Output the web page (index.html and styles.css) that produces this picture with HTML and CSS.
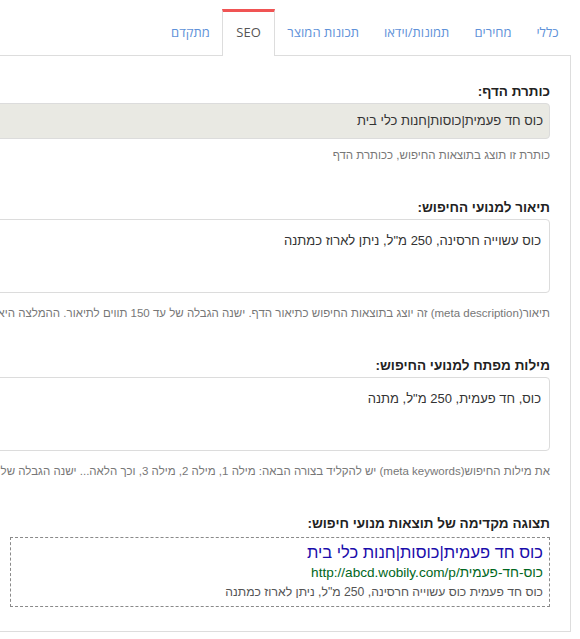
FILE: index.html
```html
<!DOCTYPE html>
<html dir="rtl" lang="he">
<head>
<meta charset="utf-8">
<title>SEO</title>
<link rel="stylesheet" href="styles.css">
</head>
<body>
<div class="page">
  <ul class="tabs">
    <li class="tab">כללי</li>
    <li class="tab">מחירים</li>
    <li class="tab">תמונות/וידאו</li>
    <li class="tab">תכונות המוצר</li>
    <li class="tab tab-active">SEO</li>
    <li class="tab">מתקדם</li>
  </ul>
  <div class="panel">
    <div class="field">
      <label class="label">כותרת הדף:</label>
      <div class="control control-readonly">כוס חד פעמית|כוסות|חנות כלי בית</div>
      <p class="help">כותרת זו תוצג בתוצאות החיפוש, ככותרת הדף</p>
    </div>
    <div class="field">
      <label class="label">תיאור למנועי החיפוש:</label>
      <div class="control control-area">כוס עשוייה חרסינה, 250 מ"ל, ניתן לארוז כמתנה</div>
      <p class="help help-area">תיאור(meta description) זה יוצג בתוצאות החיפוש כתיאור הדף. ישנה הגבלה של עד 150 תווים לתיאור. ההמלצה היא לכתוב תיאור קצר וממוקד.</p>
    </div>
    <div class="field">
      <label class="label">מילות מפתח למנועי החיפוש:</label>
      <div class="control control-area">כוס, חד פעמית, 250 מ"ל, מתנה</div>
      <p class="help help-area">את מילות החיפוש(meta keywords) יש להקליד בצורה הבאה: מילה 1, מילה 2, מילה 3, וכך הלאה... ישנה הגבלה של עד 10 מילים.</p>
    </div>
    <div class="preview-field">
      <label class="label label-preview">תצוגה מקדימה של תוצאות מנועי חיפוש:</label>
      <div class="preview">
        <div class="preview-title">כוס חד פעמית|כוסות|חנות כלי בית</div>
        <div class="preview-url">http://abcd.wobily.com/p/כוס-חד-פעמית</div>
        <div class="preview-desc">כוס חד פעמית כוס עשוייה חרסינה, 250 מ"ל, ניתן לארוז כמתנה</div>
      </div>
    </div>
  </div>
</div>
</body>
</html>
```
FILE: styles.css
```css
html {
  overflow: hidden;
  background: #fff;
}
body {
  margin: 0;
  direction: rtl;
  font-family: "Liberation Sans", Arial, sans-serif;
  color: #333;
}
.page {
  padding-top: 9px;
  margin-right: 9px;
}
.tabs {
  display: flex;
  list-style: none;
  margin: 0;
  padding: 0;
  border-bottom: 1px solid #dddddd;
}
.tab {
  padding: 10px 11.5px 14px;
  margin-bottom: -1px;
  border: 1px solid transparent;
  border-top: 3px solid transparent;
  border-bottom: 0;
  font-family: "Open Sans", "Noto Sans", sans-serif;
  font-size: 13px;
  line-height: 20px;
  color: #5f92d9;
  white-space: nowrap;
}
.tab-active {
  background: #fff;
  border-color: #dddddd;
  border-top-color: #f05454;
  color: #555;
  padding-left: 13px;
  padding-right: 13px;
}
.panel {
  width: 1000px;
  box-sizing: border-box;
  border: 1px solid #dddddd;
  border-top: 0;
  padding: 26px 20px 24px;
}
.field {
  margin-bottom: 35px;
}
.label {
  display: block;
  font-size: 13.5px;
  line-height: 20px;
  font-weight: bold;
  color: #222;
  margin-bottom: 1px;
}
.control {
  box-sizing: border-box;
  border: 1px solid #dcdcdc;
  border-radius: 4px;
  font-size: 13px;
  line-height: 20px;
  color: #333;
  white-space: nowrap;
}
.control-readonly {
  height: 36px;
  padding: 7px 6px;
  background: #e9e9e3;
}
.control-area {
  height: 74px;
  padding: 11px 8px;
  background: #fff;
}
.help {
  margin: 8px 0 0;
  font-size: 11.5px;
  line-height: 16px;
  color: #777;
  white-space: nowrap;
}
.help-area {
  margin-top: 12px;
}
.label-preview {
  margin-bottom: 3px;
}
.preview {
  width: 540px;
  box-sizing: border-box;
  border: 1px dashed #8a8a8a;
  padding: 3px 6px 5px;
}
.preview-title {
  font-size: 16.5px;
  line-height: 22px;
  color: #1a0dab;
}
.preview-url {
  direction: ltr;
  text-align: right;
  font-size: 13.6px;
  line-height: 20px;
  color: #006621;
}
.preview-desc {
  font-size: 12.2px;
  line-height: 18px;
  color: #545454;
}
```
